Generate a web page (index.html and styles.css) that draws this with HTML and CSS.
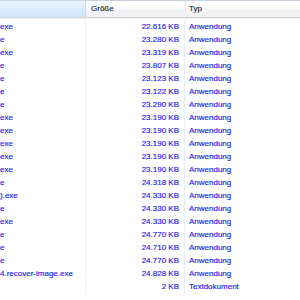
FILE: index.html
```html
<!DOCTYPE html>
<html>
<head>
	<title>Dateien</title>

	<link rel="stylesheet" href="styles.css">
</head>
<body>
	<div id="list">
		<div class="head">
			<div class="sorted"></div>
			<div>Größe</div>
			<div>Typ</div>
		</div>

		<div class="rows">
			<div class="row"><span>exe</span><span>22.616 KB</span><span>Anwendung</span></div>
			<div class="row"><span>e</span><span>23.280 KB</span><span>Anwendung</span></div>
			<div class="row"><span>exe</span><span>23.319 KB</span><span>Anwendung</span></div>
			<div class="row"><span>e</span><span>23.807 KB</span><span>Anwendung</span></div>
			<div class="row"><span>e</span><span>23.123 KB</span><span>Anwendung</span></div>
			<div class="row"><span>e</span><span>23.122 KB</span><span>Anwendung</span></div>
			<div class="row"><span>e</span><span>23.290 KB</span><span>Anwendung</span></div>
			<div class="row"><span>exe</span><span>23.190 KB</span><span>Anwendung</span></div>
			<div class="row"><span>exe</span><span>23.190 KB</span><span>Anwendung</span></div>
			<div class="row"><span>exe</span><span>23.190 KB</span><span>Anwendung</span></div>
			<div class="row"><span>exe</span><span>23.190 KB</span><span>Anwendung</span></div>
			<div class="row"><span>exe</span><span>23.190 KB</span><span>Anwendung</span></div>
			<div class="row"><span>e</span><span>24.318 KB</span><span>Anwendung</span></div>
			<div class="row"><span>).exe</span><span>24.330 KB</span><span>Anwendung</span></div>
			<div class="row"><span>e</span><span>24.330 KB</span><span>Anwendung</span></div>
			<div class="row"><span>exe</span><span>24.330 KB</span><span>Anwendung</span></div>
			<div class="row"><span>e</span><span>24.770 KB</span><span>Anwendung</span></div>
			<div class="row"><span>e</span><span>24.710 KB</span><span>Anwendung</span></div>
			<div class="row"><span>e</span><span>24.770 KB</span><span>Anwendung</span></div>
			<div class="row"><span>4.recover-image.exe</span><span>24.828 KB</span><span>Anwendung</span></div>
			<div class="row"><span></span><span>2 KB</span><span>Textdokument</span></div>
		</div>
	</div>
</body>
</html>
```

FILE: styles.css
```css
body {
	margin: 0;
	background: white;
	font-family: "Liberation Sans", Arial, sans-serif;
	font-size: 8px;
}

#list {
	width: 300px;
	height: 300px;
	overflow: hidden;
}

.head {
	display: grid;
	grid-template-columns: 86px 100px 1fr;
	height: 16px;
	border-top: 1px solid #c9d3de;
	border-bottom: 1px solid #d5d5d5;
	background: linear-gradient(#ffffff 0%, #ffffff 45%, #f3f4f6 50%, #f1f2f4 100%);
	color: #1b2534;
	-webkit-text-stroke: 0.15px #1b2534;
}

.head div {
	border-right: 1px solid #e3e5e8;
	padding-left: 5px;
	line-height: 16px;
}

.head div:nth-child(3) {
	padding-left: 3px;
	border-right: none;
}

.head .sorted {
	background: linear-gradient(#e6f3fd 0%, #e1effc 45%, #d7eafa 50%, #d5e8f9 100%);
	border-right: 1px solid #c6d9ea;
}

.rows {
	border-top: 1px solid #f0f0f0;
	padding-top: 1px;
}

.row {
	display: grid;
	grid-template-columns: 86px 99px 1fr;
	height: 13px;
	line-height: 13px;
	color: #1a1af2;
	-webkit-text-stroke: 0.15px #1a1af2;
}

.row span {
	white-space: nowrap;
	overflow: hidden;
}

.row span:nth-child(1) {
	border-right: 1px solid #f1f1f1;
}

.row span:nth-child(2) {
	text-align: right;
	padding-right: 5px;
	border-right: 1px solid #e9eef6;
}

.row span:nth-child(3) {
	padding-left: 4px;
}
```
